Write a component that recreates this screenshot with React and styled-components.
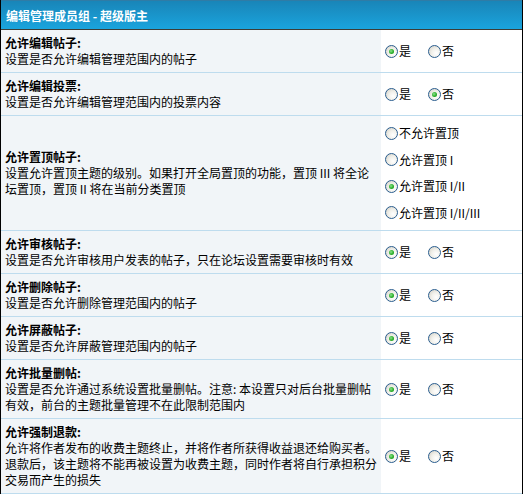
import React from "react";
import styled, { createGlobalStyle } from "styled-components";

const Global = createGlobalStyle`
  html, body { margin: 0; padding: 0; background: #ffffff; }
  body {
    font-family: "Noto Sans CJK SC", "Noto Sans", sans-serif;
    font-size: 12px;
    color: #000;
  }
`;

const Panel = styled.div`
  width: 523px;
  box-sizing: border-box;
  border-left: 1px solid #000;
  border-right: 1px solid #000;
  background: #fff;
`;

const Header = styled.div`
  height: 30px;
  box-sizing: border-box;
  display: flex;
  align-items: center;
  padding-left: 5px;
  border-top: 1px solid #2f7ca6;
  border-bottom: 1px solid #3d3d36;
  background: linear-gradient(to bottom, #1985b8 0%, #1aa4dd 100%);
  color: #fff;
  font-weight: bold;
  font-size: 12px;
`;

const Row = styled.div`
  display: grid;
  grid-template-columns: 380px 1fr;
  border-bottom: 1px solid #bedcee;
`;

const Info = styled.div`
  background: #f1f5f8;
  padding: 5px 3px 5px 4px;
  display: flex;
  flex-direction: column;
  justify-content: center;
  line-height: 16px;
`;

const Title = styled.div`
  font-weight: bold;
`;

const Desc = styled.div``;

const Options = styled.div`
  display: flex;
  flex-direction: ${(p) => (p.$stacked ? "column" : "row")};
  align-items: ${(p) => (p.$stacked ? "flex-start" : "center")};
  justify-content: ${(p) => (p.$stacked ? "center" : "flex-start")};
  padding: ${(p) => (p.$stacked ? "4px 0 4px 4px" : "0 0 0 4px")};
  gap: ${(p) => (p.$stacked ? "0" : "17px")};
`;

const Option = styled.label`
  display: flex;
  align-items: center;
  gap: 1px;
  height: ${(p) => (p.$stacked ? "26.5px" : "auto")};
  line-height: 16px;
  white-space: nowrap;
`;

const Radio = styled.input.attrs({ type: "radio" })`
  appearance: none;
  -webkit-appearance: none;
  margin: 0;
  width: 13px;
  height: 13px;
  border-radius: 50%;
  border: 1px solid #2a5d8e;
  box-sizing: border-box;
  background: radial-gradient(circle at 65% 65%, #ffffff 0%, #f1f0ea 45%, #cfccc2 100%);
  position: relative;
  flex: none;

  &:checked::after {
    content: "";
    position: absolute;
    left: 3px;
    top: 3px;
    width: 5px;
    height: 5px;
    border-radius: 50%;
    background: radial-gradient(circle at 40% 40%, #8fe08f 0%, #2ab02a 55%, #17861a 100%);
  }
`;

const rows = [
  {
    title: "允许编辑帖子:",
    desc: "设置是否允许编辑管理范围内的帖子",
    options: ["是", "否"],
    checked: 0,
  },
  {
    title: "允许编辑投票:",
    desc: "设置是否允许编辑管理范围内的投票内容",
    options: ["是", "否"],
    checked: 1,
  },
  {
    title: "允许置顶帖子:",
    desc: "设置允许置顶主题的级别。如果打开全局置顶的功能，置顶 III 将全论坛置顶，置顶 II 将在当前分类置顶",
    options: ["不允许置顶", "允许置顶 I", "允许置顶 I/II", "允许置顶 I/II/III"],
    checked: 2,
    stacked: true,
  },
  {
    title: "允许审核帖子:",
    desc: "设置是否允许审核用户发表的帖子，只在论坛设置需要审核时有效",
    options: ["是", "否"],
    checked: 0,
  },
  {
    title: "允许删除帖子:",
    desc: "设置是否允许删除管理范围内的帖子",
    options: ["是", "否"],
    checked: 0,
  },
  {
    title: "允许屏蔽帖子:",
    desc: "设置是否允许屏蔽管理范围内的帖子",
    options: ["是", "否"],
    checked: 0,
  },
  {
    title: "允许批量删帖:",
    desc: "设置是否允许通过系统设置批量删帖。注意: 本设置只对后台批量删帖有效，前台的主题批量管理不在此限制范围内",
    options: ["是", "否"],
    checked: 0,
  },
  {
    title: "允许强制退款:",
    desc: "允许将作者发布的收费主题终止，并将作者所获得收益退还给购买者。退款后，该主题将不能再被设置为收费主题，同时作者将自行承担积分交易而产生的损失",
    options: ["是", "否"],
    checked: 0,
  },
];

export default function App() {
  return (
    <>
      <Global />
      <Panel>
        <Header>编辑管理成员组 - 超级版主</Header>
        {rows.map((r, i) => (
          <Row key={i}>
            <Info>
              <Title>{r.title}</Title>
              <Desc>{r.desc}</Desc>
            </Info>
            <Options $stacked={r.stacked}>
              {r.options.map((o, j) => (
                <Option key={j} $stacked={r.stacked}>
                  <Radio name={`perm-${i}`} defaultChecked={j === r.checked} />
                  {o}
                </Option>
              ))}
            </Options>
          </Row>
        ))}
      </Panel>
    </>
  );
}
